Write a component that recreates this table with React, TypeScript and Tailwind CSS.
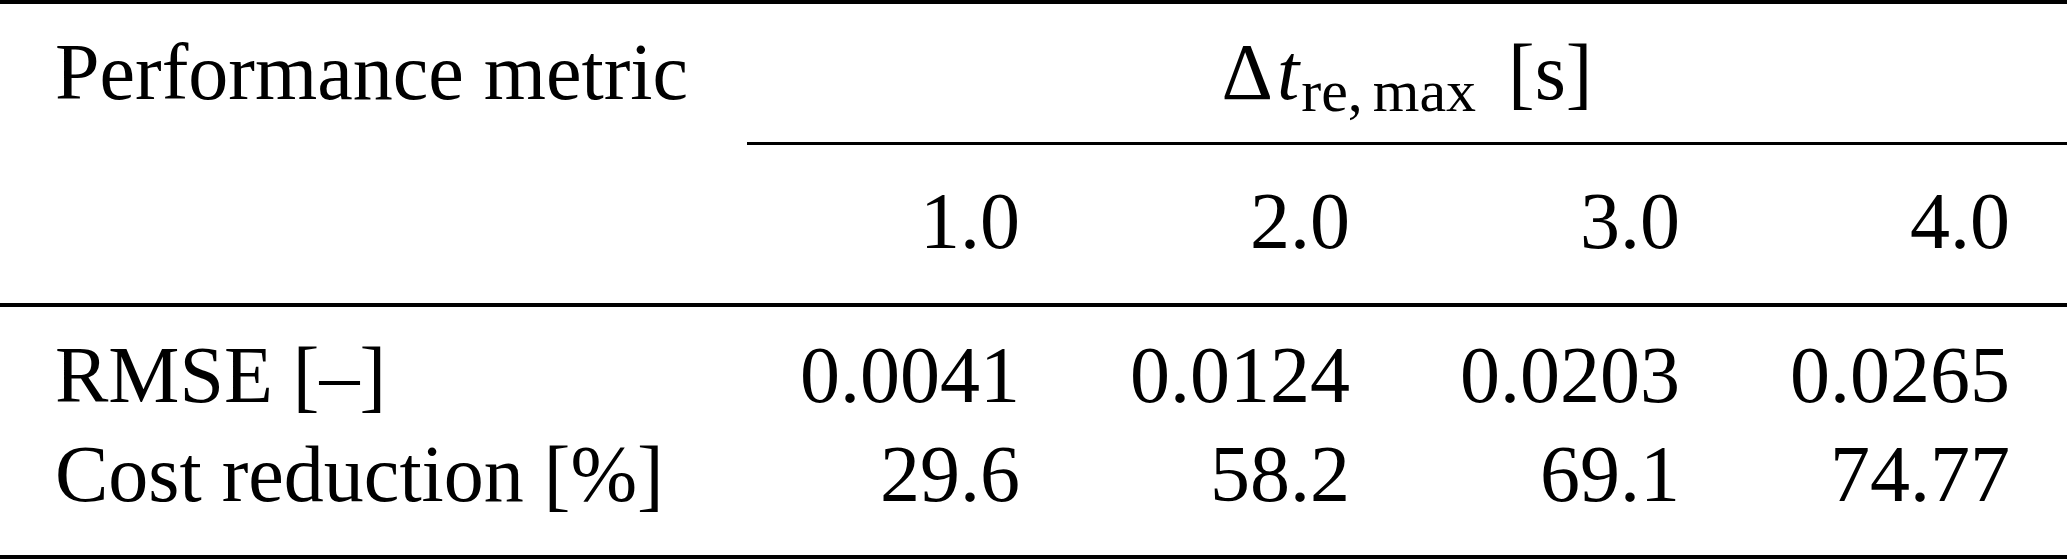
const cols = ['1.0', '2.0', '3.0', '4.0'];

const rows = [
  { label: 'RMSE [–]', values: ['0.0041', '0.0124', '0.0203', '0.0265'] },
  { label: 'Cost reduction [%]', values: ['29.6', '58.2', '69.1', '74.77'] },
];

export default function App() {
  return (
    <div className="w-[2067px] h-[560px] bg-white text-black font-['Liberation_Serif','Times_New_Roman',serif] text-[80px]">
      {/* top rule */}
      <div className="h-[4px] bg-black" />

      {/* header */}
      <div className="grid grid-cols-[747px_330px_330px_330px_330px]">
        <div className="h-[138px] leading-[136px] pl-[55px] whitespace-nowrap">Performance metric</div>
        <div className="col-span-4 h-[138px] leading-[136px] text-center whitespace-nowrap">
          <span>Δ</span>
          <span className="italic ml-[4px]">t</span>
          <span className="relative top-[12px] text-[60px] ml-[2px]">
            re,<span className="ml-[10px]">max</span>
          </span>
          <span className="ml-[32px]">[s]</span>
        </div>

        {/* cmidrule */}
        <div className="h-[3px]" />
        <div className="col-span-4 h-[3px] bg-black" />

        <div className="h-[158px]" />
        {cols.map((c) => (
          <div key={c} className="h-[158px] leading-[152px] text-right pr-[57px]">
            {c}
          </div>
        ))}
      </div>

      {/* midrule */}
      <div className="h-[4px] bg-black" />

      {/* body */}
      <div className="pt-[19px] pb-[31px]">
        {rows.map((r) => (
          <div key={r.label} className="grid grid-cols-[747px_330px_330px_330px_330px] leading-[99px]">
            <div className="pl-[55px] whitespace-nowrap">{r.label}</div>
            {r.values.map((v, i) => (
              <div key={i} className="text-right pr-[57px]">
                {v}
              </div>
            ))}
          </div>
        ))}
      </div>

      {/* bottom rule */}
      <div className="h-[4px] bg-black" />
    </div>
  );
}
